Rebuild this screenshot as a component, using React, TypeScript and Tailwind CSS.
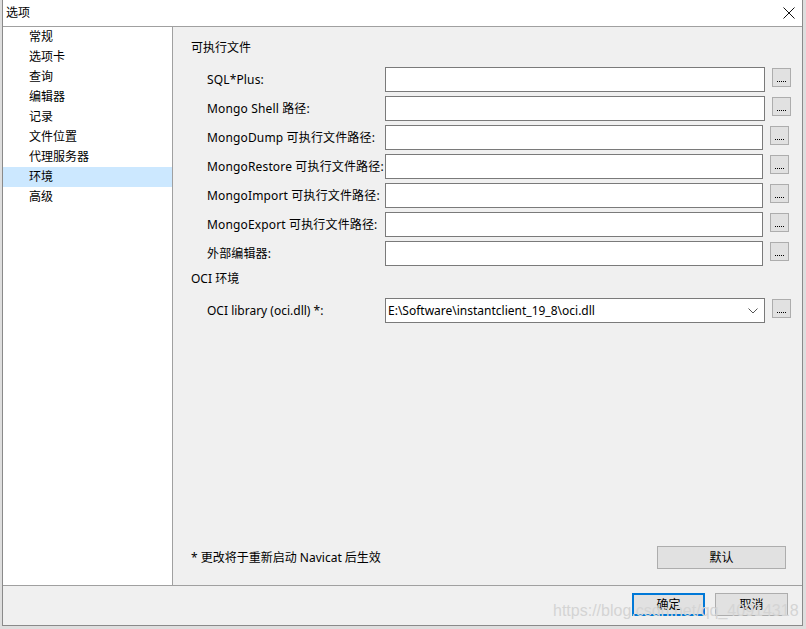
import React from "react";

const font = { fontFamily: '"Noto Sans", "Noto Sans CJK SC", sans-serif' };

const sideItems = ["常规", "选项卡", "查询", "编辑器", "记录", "文件位置", "代理服务器", "环境", "高级"];

const rows: { label: string; wide: boolean }[] = [
  { label: "SQL*Plus:", wide: true },
  { label: "Mongo Shell 路径:", wide: true },
  { label: "MongoDump 可执行文件路径:", wide: false },
  { label: "MongoRestore 可执行文件路径:", wide: false },
  { label: "MongoImport 可执行文件路径:", wide: false },
  { label: "MongoExport 可执行文件路径:", wide: false },
  { label: "外部编辑器:", wide: false },
];

function Dots() {
  return (
    <div className="w-[19px] h-[19px] border border-[#adadad] bg-[#e1e1e1] flex items-end justify-center pb-[4px]">
      <div className="flex gap-[1px]">
        <span className="w-[1px] h-[1px] bg-black" />
        <span className="w-[1px] h-[1px] bg-black" />
        <span className="w-[1px] h-[1px] bg-black" />
        <span className="w-[1px] h-[1px] bg-black" />
        <span className="w-[1px] h-[1px] bg-black" />
      </div>
    </div>
  );
}

export default function App() {
  return (
    <div className="w-[806px] h-[629px] bg-[#dedede] overflow-hidden relative text-[12px] text-black" style={font}>
      <div className="ml-[2px] w-[801px] h-[626px] border-l border-r border-b border-[#8a8a8a] bg-[#f0f0f0] flex flex-col">
        {/* title bar */}
        <div className="h-[27px] bg-white border-b border-[#a0a0a0] flex items-center justify-between pl-[3px] pr-[6px] shrink-0">
          <span className="leading-[16px] pb-[1px]">选项</span>
          <svg width="12" height="12" viewBox="0 0 12 12" className="mr-[1px]">
            <path d="M0.5 0.5 L11.5 11.5 M11.5 0.5 L0.5 11.5" stroke="#111" strokeWidth="1" fill="none" />
          </svg>
        </div>
        {/* main */}
        <div className="flex h-[559px] border-b border-[#a0a0a0] shrink-0">
          <div className="w-[170px] bg-white border-r border-[#a0a0a0] shrink-0">
            {sideItems.map((s) => (
              <div
                key={s}
                className={
                  "h-[20px] pl-[26px] flex items-center " + (s === "环境" ? "bg-[#cce8ff]" : "")
                }
              >
                {s}
              </div>
            ))}
          </div>
          <div className="flex-1 flex flex-col pl-[18px] pr-[15px] pt-[13px]">
            <div className="h-[16px] leading-[16px] mb-[11px]">可执行文件</div>
            {rows.map((r) => (
              <div key={r.label} className="h-[29px] flex items-start">
                <div className="w-[194px] pl-[16px] h-[25px] flex items-center whitespace-nowrap overflow-visible tracking-[0.15px]">
                  {r.label}
                </div>
                <div
                  className={
                    (r.wide ? "w-[380px]" : "w-[378px]") +
                    " h-[25px] border border-[#7a7a7a] bg-white shrink-0"
                  }
                />
                <div className="ml-[7px] mt-[1px]">
                  <Dots />
                </div>
              </div>
            ))}
            <div className="h-[16px] leading-[16px] mt-[1px] mb-[11px]">OCI 环境</div>
            <div className="h-[25px] flex items-start">
              <div className="w-[194px] pl-[16px] h-[25px] flex items-center whitespace-nowrap">
                OCI library (oci.dll) *:
              </div>
              <div className="w-[380px] h-[25px] border border-[#7a7a7a] bg-white shrink-0 flex items-center pl-[2px] pr-[6px] justify-between">
                <span className="text-[12px]">E:\Software\instantclient_19_8\oci.dll</span>
                <svg width="10" height="6" viewBox="0 0 10 6">
                  <path d="M0.5 0.5 L5 5 L9.5 0.5" stroke="#555" strokeWidth="1" fill="none" />
                </svg>
              </div>
              <div className="ml-[7px] mt-[1px]">
                <Dots />
              </div>
            </div>
            <div className="flex-1" />
            <div className="flex items-center justify-between mb-[16px]">
              <span>* 更改将于重新启动 Navicat 后生效</span>
              <div className="w-[129px] h-[23px] mr-[5px] border border-[#adadad] bg-[#e1e1e1] flex items-center justify-center">
                默认
              </div>
            </div>
          </div>
        </div>
        {/* bottom bar */}
        <div className="flex-1 flex justify-end items-start pt-[7px] pr-[14px] gap-[10px]">
          <div className="w-[73px] h-[23px] border-2 border-[#0078d7] bg-[#e1e1e1] flex items-center justify-center">
            确定
          </div>
          <div className="w-[73px] h-[23px] border border-[#adadad] bg-[#e1e1e1] flex items-center justify-center">
            取消
          </div>
        </div>
      </div>
      <div
        className="absolute left-[553px] top-[599px] text-[16px] text-[#d4d4d4] whitespace-nowrap pointer-events-none"
        style={{ fontFamily: '"Liberation Sans", sans-serif' }}
      >
        https://blog.csdn.net/qq_40914318
      </div>
    </div>
  );
}
